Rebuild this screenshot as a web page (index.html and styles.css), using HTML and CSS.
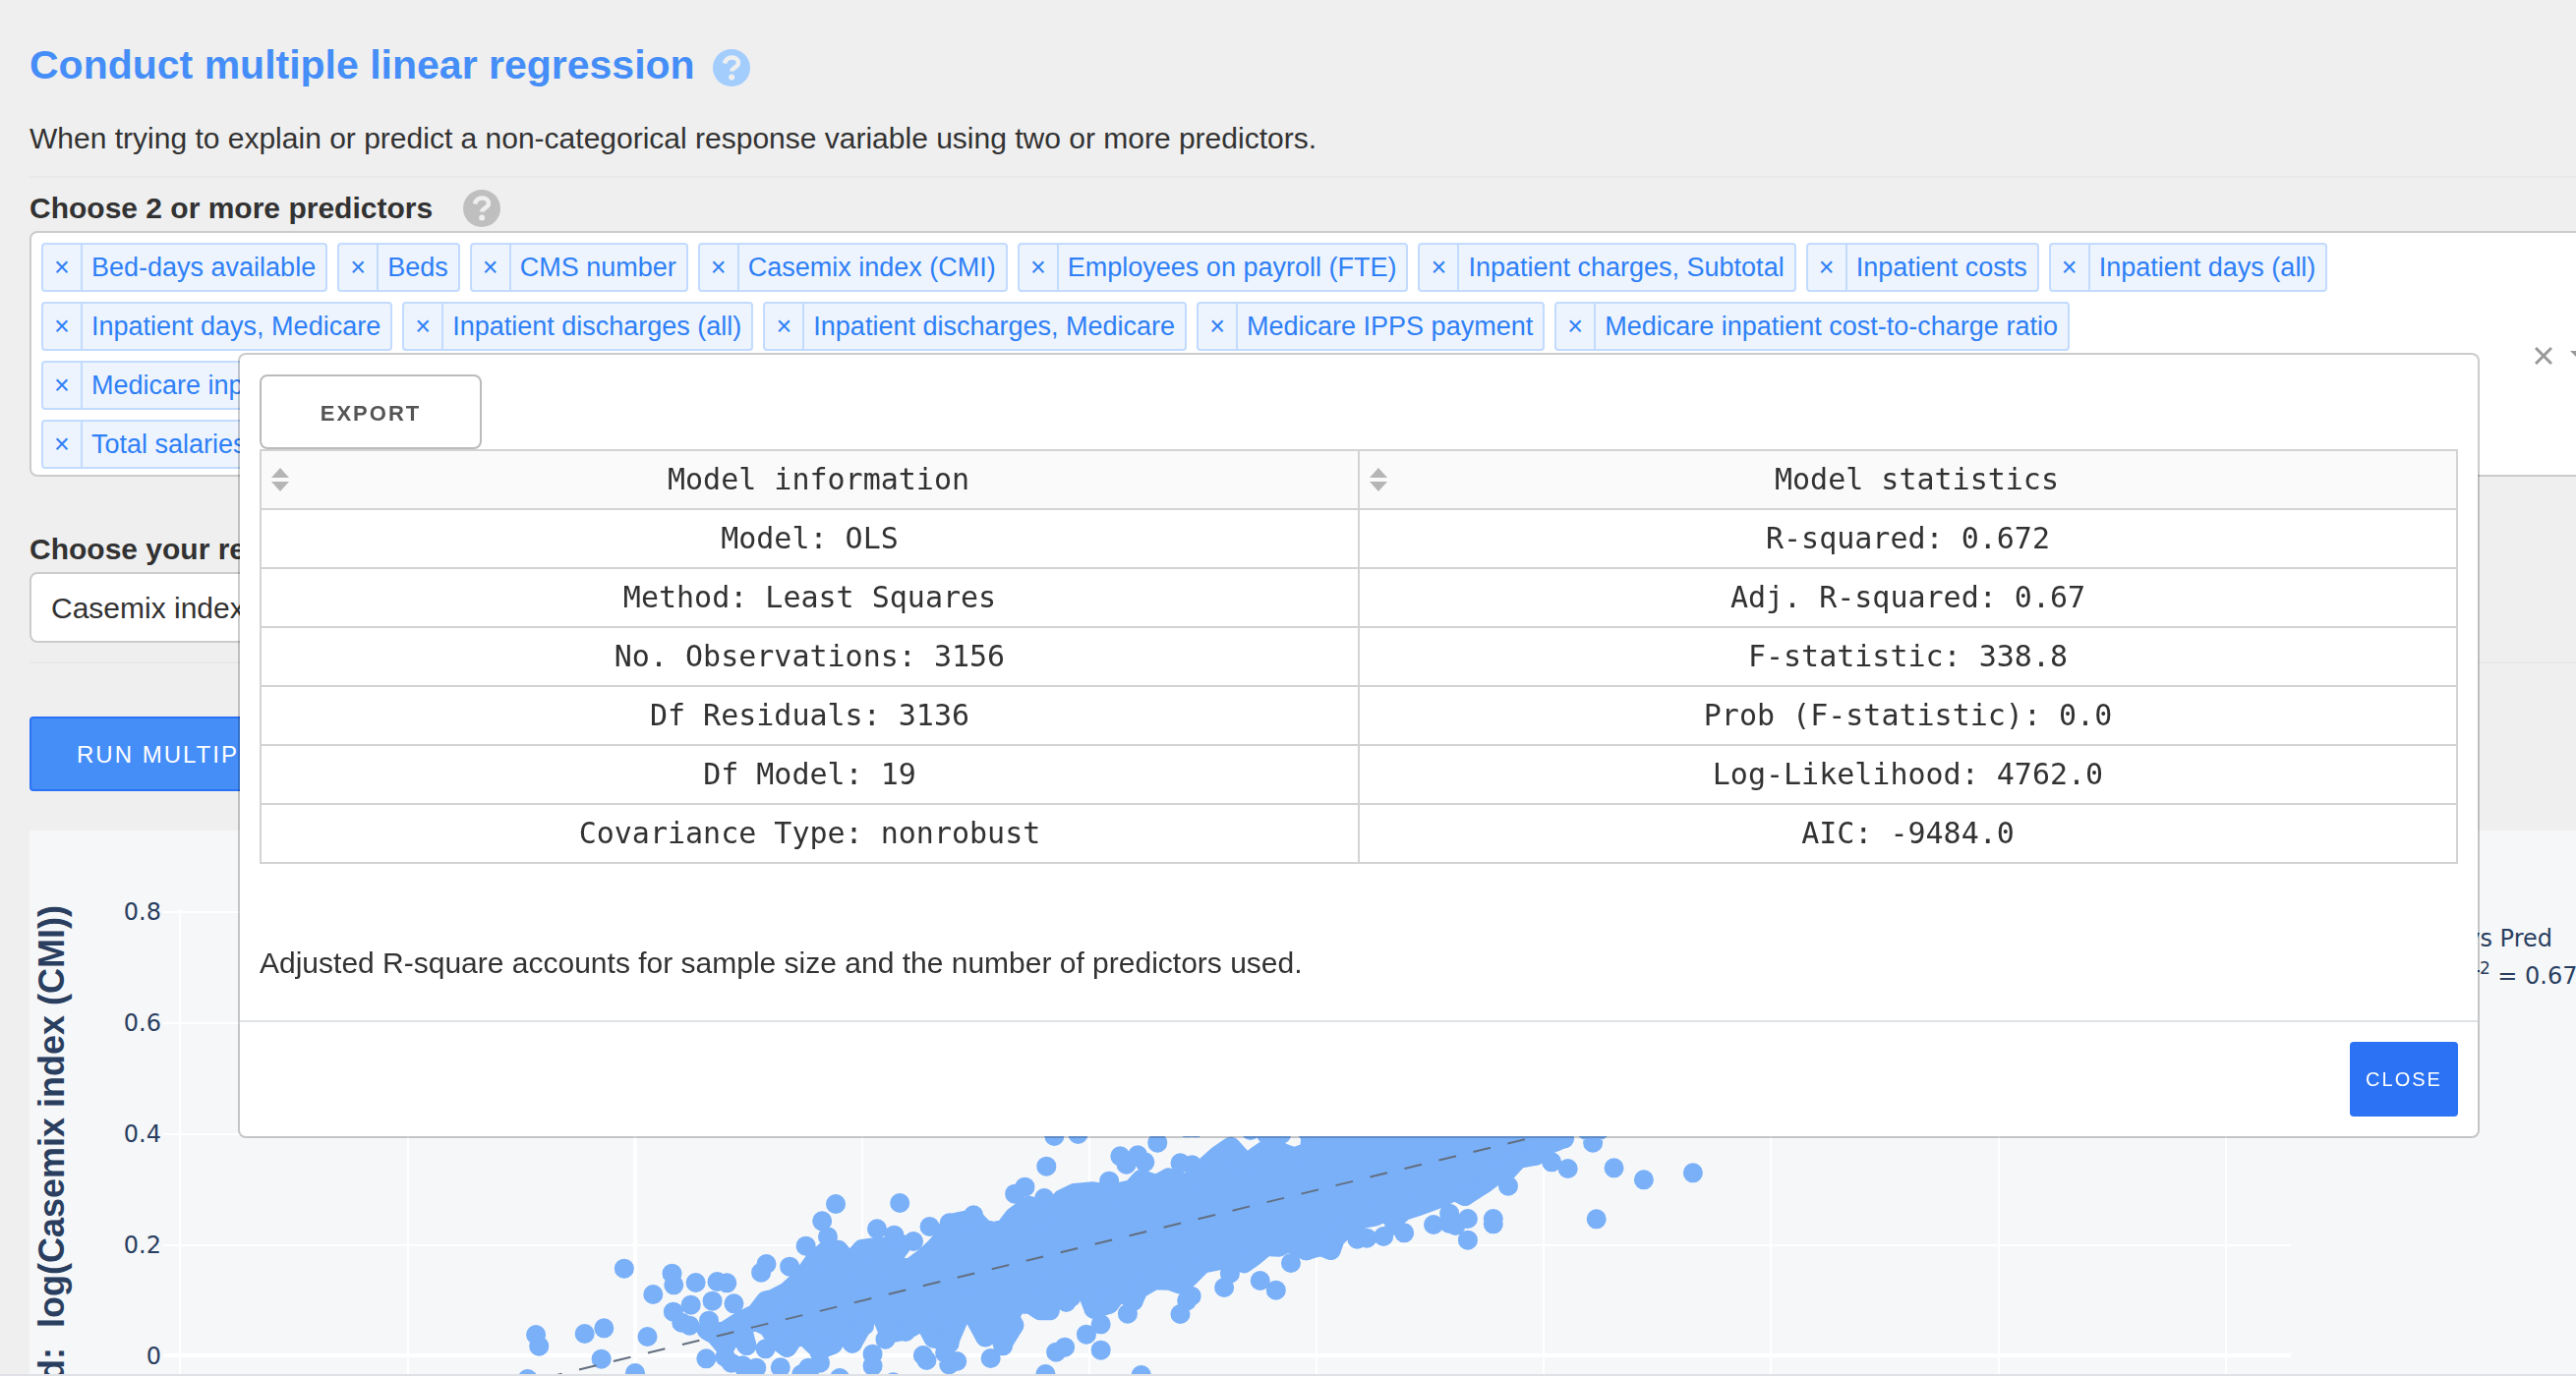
FILE: index.html
```html
<!DOCTYPE html>
<html lang="en">
<head>
<meta charset="utf-8">
<title>Multiple linear regression</title>
<link rel="stylesheet" href="styles.css">
</head>
<body>
<svg class="defs" width="0" height="0" aria-hidden="true">
  <symbol id="help" viewBox="0 0 38 38">
    <circle cx="19" cy="19" r="19" fill="currentColor"/>
    <path d="M12 14.500C13 10.500 16 8.500 19.500 8.500C23.500 8.500 26 11 26 14C26 18.500 19.300 18.500 19.300 22.500" fill="none" stroke="#efefef" stroke-width="4.500"/>
    <circle cx="19.200" cy="28.500" r="3" fill="#efefef"/>
  </symbol>
  <symbol id="sort" viewBox="0 0 18 24">
    <path d="M9 0L18 10H0ZM0 14H18L9 24Z" fill="#b5b5b5"/>
  </symbol>
</svg>

<main class="page">
  <header class="title-row">
    <h1>Conduct multiple linear regression</h1>
    <svg class="help help-blue" role="img" aria-label="Help"><use href="#help"/></svg>
  </header>
  <p class="intro">When trying to explain or predict a non-categorical response variable using two or more predictors.</p>
  <hr>

  <div class="label-row">
    <h2 id="predictors-label">Choose 2 or more predictors</h2>
    <svg class="help help-grey" role="img" aria-label="Help"><use href="#help"/></svg>
  </div>
  <div class="multi" role="group" aria-labelledby="predictors-label">
    <div class="chip-rows">
      <div class="chips">
        <span class="chip"><button type="button">×</button><span>Bed-days available</span></span>
        <span class="chip"><button type="button">×</button><span>Beds</span></span>
        <span class="chip"><button type="button">×</button><span>CMS number</span></span>
        <span class="chip"><button type="button">×</button><span>Casemix index (CMI)</span></span>
        <span class="chip"><button type="button">×</button><span>Employees on payroll (FTE)</span></span>
        <span class="chip"><button type="button">×</button><span>Inpatient charges, Subtotal</span></span>
        <span class="chip"><button type="button">×</button><span>Inpatient costs</span></span>
        <span class="chip"><button type="button">×</button><span>Inpatient days (all)</span></span>
      </div>
      <div class="chips">
        <span class="chip"><button type="button">×</button><span>Inpatient days, Medicare</span></span>
        <span class="chip"><button type="button">×</button><span>Inpatient discharges (all)</span></span>
        <span class="chip"><button type="button">×</button><span>Inpatient discharges, Medicare</span></span>
        <span class="chip"><button type="button">×</button><span>Medicare IPPS payment</span></span>
        <span class="chip"><button type="button">×</button><span>Medicare inpatient cost-to-charge ratio</span></span>
      </div>
      <div class="chips">
        <span class="chip"><button type="button">×</button><span>Medicare inpatient</span></span>
      </div>
      <div class="chips">
        <span class="chip"><button type="button">×</button><span>Total salaries</span></span>
      </div>
    </div>
    <div class="indicators">
      <button type="button" aria-label="Clear"><svg width="18" height="18"><path d="M1 1L17 17M17 1L1 17" stroke="#999" stroke-width="3"/></svg></button>
      <svg width="20" height="10"><path d="M0 0H20L10 10Z" fill="#999"/></svg>
    </div>
  </div>

  <label class="response-label" for="response">Choose your response</label>
  <select id="response" class="response"><option>Casemix index (CMI)</option></select>
  <hr class="hr-form">
  <button type="button" class="run">RUN MULTIPLE REGRESSION</button>

  <svg class="chart" role="img" aria-label="Observed against predicted values">
    <g stroke="#fff" stroke-width="2">
      <path d="M153 80V553M385 80V553M847 80V553M1078 80V553M1309 80V553M1540 80V553M1771 80V553M2003 80V553M2234 80V553"/>
      <path d="M136 83H2300M136 196H2300M136 309H2300M136 422H2300"/>
      <path d="M616 80V553M136 534H2300" stroke-width="4"/>
    </g>
    <g class="ticks">
      <text x="134" y="91">0.8</text>
      <text x="134" y="204">0.6</text>
      <text x="134" y="317">0.4</text>
      <text x="134" y="430">0.2</text>
      <text x="134" y="543">0</text>
    </g>
    <text class="axis-title" transform="translate(35 76) rotate(-90)">Observed:  log(Casemix index (CMI))</text>
    <g class="points">
      <path class="mass" transform="translate(470 295) scale(.44643 .33333)" d="M490 640L527 647L568 612L602 590L625 550L640 546L674 522L708 480L735 430L760 400L790 395L815 437L844 393L870 388L910 385L935 378L912 420L905 450L955 450L985 420L1010 390L1030 360L1045 315L1098 300L1120 330L1145 340L1170 330L1190 295L1225 260L1255 300L1300 240L1328 222L1370 217L1410 225L1460 210L1480 180L1515 196L1543 175L1584 195L1629 138L1654 108L1684 80L1719 132L1744 108L1774 80L1804 100L1829 112L1864 95L1868 20L2434 20L2440 55L2424 65L2384 85L2379 107L2339 117L2309 160L2284 170L2260 194L2217 231L2194 215L2164 235L2134 250L2114 260L2079 275L2057 300L2034 280L2012 293L1984 300L1944 330L1922 360L1912 396L1889 383L1856 397L1814 370L1794 386L1764 384L1737 414L1714 436L1684 420L1644 430L1619 437L1589 478L1569 500L1544 488L1509 487L1474 515L1462 550L1432 517L1407 560L1372 575L1350 500L1320 485L1309 550L1290 485L1262 510L1272 580L1250 580L1227 560L1195 560L1180 600L1190 625L1165 680L1150 640L1125 661L1100 600L1070 540L1062 612L1040 680L1005 660L985 610L943 640L905 650L890 600L870 590L845 560L845 625L822 680L795 630L777 684L747 700L715 660L690 660L673 693L650 670L630 630L600 610L570 630L581 687L556 630L532 690L510 655Z"/>
      <path class="dots" transform="translate(470 295) scale(.44643 .33333)" d="M302 452h.1M368 531h.1M411 467h.1M415 502h.1M465 495h.1M514 492h.1M536 496h.1M414 584h.1M454 563h.1M503 551h.1M552 559h.1M495 611h.1M101 654h.1M108 689h.1M212 651h.1M256 634h.1M355 660h.1M250 728h.1M82 789h.1M327 771h.1M489 727h.1M433 617h.1M451 626h.1M626 438h.1M614 464h.1M679 446h.1M716 383h.1M753 307h.1M784 255h.1M766 355h.1M930 252h.1M878 331h.1M917 350h.1M961 369h.1M998 324h.1M1043 313h.1M1069 309h.1M1098 289h.1M1264 140h.1M1192 224h.1M1215 203h.1M1259 237h.1M1282 48h.1M1336 42h.1M1432 109h.1M1472 106h.1M1446 134h.1M1488 127h.1M1407 185h.1M532 722h.1M546 740h.1M572 748h.1M603 755h.1M580 775h.1M658 754h.1M624 697h.1M581 687h.1M532 690h.1M673 693h.1M747 708h.1M748 740h.1M722 755h.1M706 775h.1M725 785h.1M793 786h.1M915 799h.1M777 684h.1M822 680h.1M868 713h.1M868 749h.1M849 626h.1M897 668h.1M943 645h.1M983 717h.1M991 732h.1M1033 710h.1M1042 745h.1M1060 735h.1M1137 726h.1M1125 661h.1M1165 688h.1M1190 625h.1M1043 680h.1M1007 665h.1M1286 707h.1M1306 692h.1M1262 774h.1M1309 555h.1M1320 540h.1"/>
      <path class="dots" transform="translate(1070 295) scale(.44643 .33333)" d="M173 68h.1M225 130h.1M252 136h.1M240 22h.1M260 22h.1M385 30h.1M420 40h.1M455 42h.1M438 60h.1M515 35h.1M105 590h.1M118 552h.1M225 591h.1M250 536h.1M240 550h.1M325 510h.1M338 467h.1M407 489h.1M443 518h.1M477 435h.1M568 396h.1M512 397h.1M628 362h.1M650 359h.1M688 354h.1M713 320h.1M735 343h.1M802 318h.1M838 284h.1M838 315h.1M852 321h.1M880 300h.1M880 365h.1M938 300h.1M938 316h.1M972 200h.1M916 194h.1M873 231h.1M1071 127h.1M1108 147h.1M1165 68h.1M1150 30h.1M1180 30h.1M1213 145h.1M1281 181h.1M1393 160h.1M1173 301h.1M44 622h.1M11 653h.1M44 701h.1M136 777h.1M995 117h.1M1035 107h.1M1100 55h.1M63 560h.1M28 575h.1"/>
    </g>
    <path d="M524 557L1600 295" fill="none" stroke="#636f80" stroke-width="2" stroke-dasharray="18 18"/>
    <g class="legend">
      <text x="2566" y="118">Obs vs Pred</text>
      <text x="2482" y="156">r<tspan class="sup" dy="-10">2</tspan><tspan dy="10"> = 0.67</tspan></text>
    </g>
  </svg>
</main>

<section class="modal" role="dialog" aria-label="Model results">
  <div class="modal-body">
    <button type="button" class="export">EXPORT</button>
    <table>
      <thead>
        <tr>
          <th scope="col"><div><svg width="18" height="24" aria-hidden="true"><use href="#sort"/></svg><span>Model information</span></div></th>
          <th scope="col"><div><svg width="18" height="24" aria-hidden="true"><use href="#sort"/></svg><span>Model statistics</span></div></th>
        </tr>
      </thead>
      <tbody>
        <tr><td>Model: OLS</td><td>R-squared: 0.672</td></tr>
        <tr><td>Method: Least Squares</td><td>Adj. R-squared: 0.67</td></tr>
        <tr><td>No. Observations: 3156</td><td>F-statistic: 338.8</td></tr>
        <tr><td>Df Residuals: 3136</td><td>Prob (F-statistic): 0.0</td></tr>
        <tr><td>Df Model: 19</td><td>Log-Likelihood: 4762.0</td></tr>
        <tr><td>Covariance Type: nonrobust</td><td>AIC: -9484.0</td></tr>
      </tbody>
    </table>
    <p>Adjusted R-square accounts for sample size and the number of predictors used.</p>
  </div>
  <footer class="modal-footer"><button type="button" class="close">CLOSE</button></footer>
</section>
</body>
</html>
```
FILE: styles.css
```css
* { box-sizing: border-box; }

body {
  margin: 0;
  overflow: hidden;
  background: #efefef;
  color: #323232;
  font: 30px/40px "Liberation Sans", Arial, sans-serif;
}

button, select { font-family: inherit; margin: 0; cursor: pointer; }
h1, h2, p { margin: 0; }

.defs { position: absolute; }

/* The form runs past the right edge of the window. */
.page {
  margin-right: -40px;
  padding: 40px 0 0 30px;
  border-bottom: 2px solid #dfe1e6;
}

.title-row, .label-row { display: flex; align-items: center; }
.title-row { gap: 18px; }
.label-row { gap: 31px; height: 40px; }

h1 { color: #458ef8; font-size: 41px; line-height: 52px; }
h2 { font-size: 30px; line-height: 40px; }

.help { width: 38px; height: 38px; flex: none; }
.help-blue { margin-top: 5px; color: #a3cdfd; }
.help-grey { color: #bfbfbf; }

.intro { margin-top: 29px; }

hr { height: 2px; margin: 18px 0 11px; border: 0; background: #e9e9e9; }
.hr-form { margin: 19px 0 54px; }

.multi {
  display: flex;
  justify-content: space-between;
  align-items: center;
  margin-top: 3px;
  padding: 10px 24px 6px 10px;
  border: 2px solid #ccc;
  border-radius: 8px;
  background: #fff;
}
.chip-rows { display: flex; flex-direction: column; gap: 10px; }
.chips { display: flex; gap: 10px; }
.chip {
  display: flex;
  height: 50px;
  border: 2px solid #c2dbff;
  border-radius: 4px;
  background: #edf4fe;
  color: #2f80f6;
  font-size: 27px;
  line-height: 46px;
  white-space: nowrap;
}
.chip button {
  width: 40px;
  padding: 0;
  border: 0;
  border-right: 2px solid #c2dbff;
  background: none;
  color: inherit;
  font-size: 27px;
  line-height: 46px;
}
.chip span { padding: 0 10px 0 9px; }

.indicators { display: flex; align-items: center; gap: 18px; }
.indicators button { display: flex; padding: 0; border: 0; background: none; }

.response-label { display: block; margin-top: 54px; font-weight: bold; }
.response {
  display: block;
  width: 860px;
  height: 72px;
  margin-top: 3px;
  padding: 0 20px;
  border: 2px solid #ccc;
  border-radius: 8px;
  background: #fff;
  color: #323232;
  font-size: 30px;
  appearance: none;
}

.run {
  display: block;
  height: 76px;
  padding: 2px 46px 0;
  border: 2px solid #2b72f4;
  border-radius: 4px;
  background: #458ef8;
  color: #fff;
  font-size: 24px;
  letter-spacing: 2px;
}

.chart {
  display: block;
  width: 100%;
  height: 553px;
  margin-top: 40px;
  background: #f6f7f9;
  font-family: "DejaVu Sans", Verdana, sans-serif;
}
.ticks, .legend { fill: #2a3f5f; font-size: 24px; }
.ticks text { text-anchor: end; }
.legend text:first-child { text-anchor: end; }
.legend .sup { font-size: 17px; }
.axis-title {
  fill: #2a3f5f;
  font: bold 36px "Liberation Sans", Arial, sans-serif;
  text-anchor: end;
  white-space: pre;
}
.points { opacity: .98; }
.mass, .dots {
  stroke: #77aff8;
  stroke-width: 20px;
  stroke-linejoin: round;
  stroke-linecap: round;
  vector-effect: non-scaling-stroke;
}
.mass { fill: #77aff8; }
.dots { fill: none; }

.modal {
  position: fixed;
  top: 359px;
  left: 242px;
  right: 98px;
  border: 2px solid rgba(0, 0, 0, .2);
  border-radius: 8px;
  background: #fff;
  background-clip: padding-box;
}
.modal-body { padding: 20px 20px 38px; }
.export {
  display: block;
  width: 226px;
  height: 76px;
  padding: 4px 0 0;
  border: 2px solid #bbb;
  border-radius: 8px;
  background: #fff;
  color: #555;
  font-size: 22px;
  font-weight: bold;
  letter-spacing: 2px;
}

table {
  width: 100%;
  table-layout: fixed;
  border-collapse: collapse;
  font: 30px/40px "DejaVu Sans Mono", Menlo, monospace;
}
th, td {
  height: 60px;
  padding: 0 10px;
  border: 2px solid #d3d3d3;
  font-weight: normal;
  text-align: center;
}
th { background: #fafafa; }
th div { display: flex; align-items: center; }
th span { flex: 1; }

.modal-body p { margin-top: 81px; }

.modal-footer {
  display: flex;
  justify-content: flex-end;
  padding: 20px;
  border-top: 2px solid #dee2e6;
}
.close {
  width: 110px;
  height: 76px;
  padding: 0;
  border: 0;
  border-radius: 4px;
  background: #2b72f4;
  color: #fff;
  font-size: 20px;
  letter-spacing: 2px;
}
```
